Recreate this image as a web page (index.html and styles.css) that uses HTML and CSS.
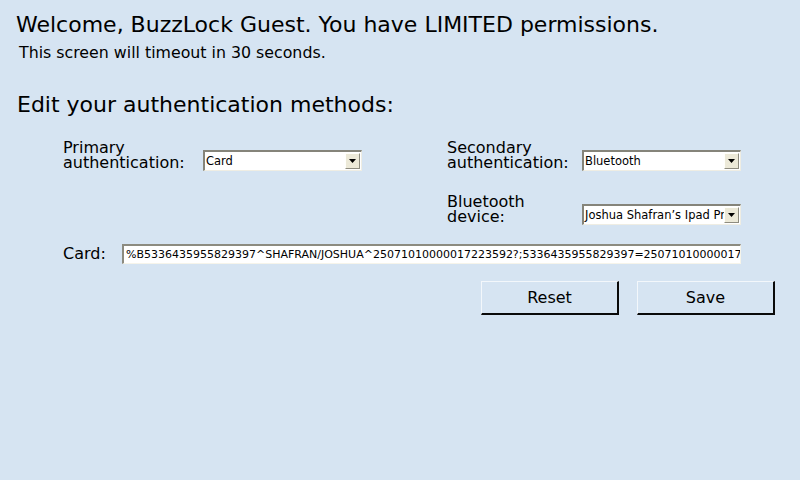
FILE: index.html
```html
<!DOCTYPE html>
<html>
<head>
<meta charset="utf-8">
<link rel="stylesheet" href="styles.css">
</head>
<body>
<div class="page">
  <h1 class="title">Welcome, BuzzLock Guest. You have LIMITED permissions.</h1>
  <p class="subtitle">This screen will timeout in 30 seconds.</p>
  <h2 class="section">Edit your authentication methods:</h2>

  <div class="grid">
    <div class="label">Primary<br>authentication:</div>
    <div class="select"><span class="val">Card</span><span class="arrow"><svg width="7" height="4" viewBox="0 0 7 4"><path d="M0 0H7L3.5 4Z" fill="#000"/></svg></span></div>
    <div class="spacer"></div>
    <div class="label">Secondary<br>authentication:</div>
    <div class="select"><span class="val">Bluetooth</span><span class="arrow"><svg width="7" height="4" viewBox="0 0 7 4"><path d="M0 0H7L3.5 4Z" fill="#000"/></svg></span></div>

    <div class="label c4">Bluetooth<br>device:</div>
    <div class="select"><span class="val">Joshua Shafran’s Ipad Pro</span><span class="arrow"><svg width="7" height="4" viewBox="0 0 7 4"><path d="M0 0H7L3.5 4Z" fill="#000"/></svg></span></div>
  </div>

  <div class="card-row">
    <div class="card-label">Card:</div>
    <div class="card-input">%B5336435955829397^SHAFRAN/JOSHUA^25071010000017223592?;5336435955829397=25071010000017223592?</div>
  </div>

  <div class="buttons">
    <button class="btn">Reset</button>
    <button class="btn">Save</button>
  </div>
</div>
</body>
</html>
```

FILE: styles.css
```css
html, body {
  margin: 0;
  padding: 0;
  background: #d6e4f2;
}
body {
  width: 800px;
  height: 480px;
  overflow: hidden;
  font-family: "DejaVu Sans", sans-serif;
  color: #000;
}
.page {
  display: flex;
  flex-direction: column;
}
.title {
  margin: 12px 0 0 16px;
  font-size: 22px;
  font-weight: normal;
  line-height: 26px;
  white-space: nowrap;
}
.subtitle {
  margin: 6px 0 0 19px;
  font-size: 15.8px;
  line-height: 18px;
}
.section {
  margin: 30px 0 0 17px;
  font-size: 22px;
  font-weight: normal;
  line-height: 26px;
}
.grid {
  margin: 22px 0 0 63px;
  display: grid;
  grid-template-columns: 140px 159px 85px 135px 159px;
  row-gap: 23px;
  align-items: end;
}
.label {
  font-size: 16px;
  line-height: 15px;
  padding-bottom: 1px;
  white-space: nowrap;
}
.label.c4 {
  grid-column: 4;
}
.select {
  display: flex;
  align-items: stretch;
  box-sizing: border-box;
  width: 159px;
  height: 21px;
  background: #fff;
  border-top: 2px solid #85847a;
  border-left: 2px solid #85847a;
  border-right: 1px solid #efede3;
  border-bottom: 1px solid #efede3;
  padding: 1px 1px 1px 0;
}
.val {
  flex: 1;
  overflow: hidden;
  white-space: nowrap;
  font-size: 11.5px;
  line-height: 16px;
  padding-left: 1px;
}
.arrow {
  flex: none;
  width: 15px;
  box-sizing: border-box;
  background: #ece9d8;
  border-top: 1px solid #fffffb;
  border-left: 1px solid #fffffb;
  border-right: 1px solid #8e8c80;
  border-bottom: 1px solid #8e8c80;
  display: flex;
  align-items: center;
  justify-content: center;
}
.arrow svg {
  display: block;
}
.card-row {
  margin: 19px 0 0 63px;
  display: flex;
  align-items: center;
}
.card-label {
  width: 59px;
  font-size: 16px;
  line-height: 20px;
}
.card-input {
  box-sizing: border-box;
  width: 619px;
  height: 20px;
  background: #fff;
  border-top: 2px solid #8c8b80;
  border-left: 2px solid #8c8b80;
  border-right: 1px solid #f6f4ea;
  border-bottom: 1px solid #f6f4ea;
  font-size: 11px;
  line-height: 17px;
  padding-left: 2px;
  white-space: nowrap;
  overflow: hidden;
}
.buttons {
  margin-top: 17px;
  padding-right: 25px;
  display: flex;
  justify-content: flex-end;
  gap: 18px;
}
.btn {
  box-sizing: border-box;
  width: 138px;
  height: 34px;
  background: #d6e4f2;
  border-top: 1px solid #f3f7fb;
  border-left: 1px solid #f3f7fb;
  border-right: 2px solid #0a0a0a;
  border-bottom: 2px solid #0a0a0a;
  font-family: "DejaVu Sans", sans-serif;
  font-size: 16px;
  color: #000;
  padding: 0;
}
```
